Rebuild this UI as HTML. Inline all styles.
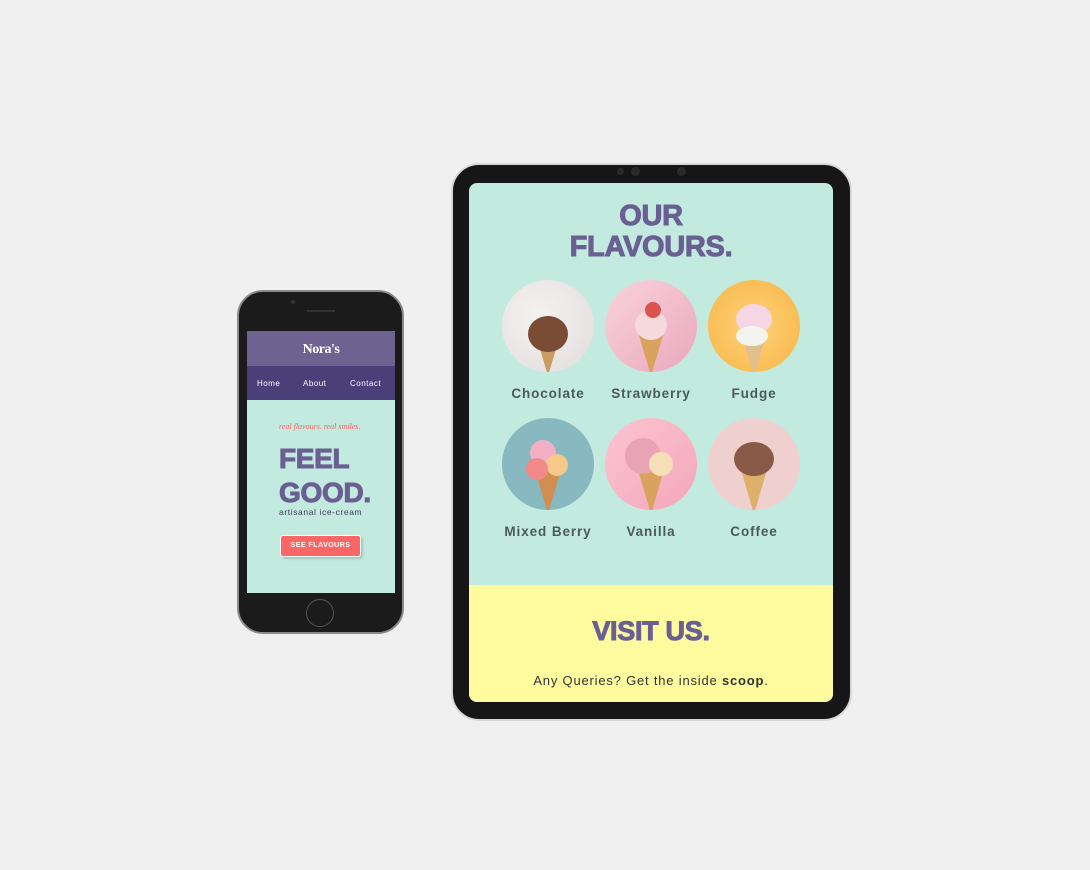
<!DOCTYPE html>
<html><head><meta charset="utf-8"><style>
*{margin:0;padding:0;box-sizing:border-box}
body{width:1090px;height:870px;background:#f0f0f0;position:relative;overflow:hidden;font-family:"Liberation Sans",sans-serif}
.abs{position:absolute}
.phone{left:237px;top:290px;width:167px;height:344px;border-radius:26px;background:#1b1b1b;border:2px solid #8a8a8a}
.pscreen{left:247px;top:331px;width:148px;height:262px;background:#c2eade;overflow:hidden}
.tab{left:451px;top:163px;width:401px;height:558px;border-radius:28px;background:#161616;border:2px solid #d8d8d8}
.tscreen{left:469px;top:183px;width:364px;height:519px;border-radius:8px;background:#c2eade;overflow:hidden}
.head{font-weight:900;color:#6a5f93;letter-spacing:-0.3px;text-align:center;line-height:1;-webkit-text-stroke:1px #6a5f93}
.circ{width:92px;height:92px;border-radius:50%;overflow:hidden}
.cone{position:absolute;left:50%;width:26px;height:44px;margin-left:-13px;bottom:-4px;background:#d9a25e;clip-path:polygon(0 0,100% 0,50% 100%)}
.scoop{position:absolute;border-radius:50%}
.lab{width:120px;text-align:center;font-weight:bold;font-size:13.5px;color:#4d5a57;letter-spacing:0.9px}
</style></head><body>

<div class="abs phone"></div>
<div class="abs" style="left:291px;top:300px;width:4px;height:4px;border-radius:50%;background:#333;"></div>
<div class="abs" style="left:307px;top:310px;width:28px;height:2px;background:#333;"></div>
<div class="abs" style="left:306px;top:599px;width:28px;height:28px;border-radius:50%;border:1.5px solid #555;"></div>
<div class="abs pscreen">
  <div class="abs" style="left:0;top:0;width:148px;height:35px;background:#6e6390;color:#fff;font-family:'Liberation Serif',serif;font-weight:bold;font-size:14px;text-align:center;line-height:37px;letter-spacing:-0.5px">Nora's</div>
  <div class="abs" style="left:0;top:35px;width:148px;height:34px;background:#4a3f78;color:#fff;font-size:8px;letter-spacing:0.5px">
    <span class="abs" style="left:10px;top:13px">Home</span>
    <span class="abs" style="left:56px;top:13px">About</span>
    <span class="abs" style="left:103px;top:13px">Contact</span>
  </div>
  <div class="abs" style="left:32px;top:91px;font-size:8px;font-style:italic;color:#f06868;font-family:'Liberation Serif',serif">real flavours. real smiles.</div>
  <div class="abs head" style="left:32px;top:111px;font-size:28px;text-align:left;line-height:34px">FEEL<br>GOOD.</div>
  <div class="abs" style="left:32px;top:176px;font-size:8.5px;color:#3e3a5a;letter-spacing:0.6px">artisanal ice-cream</div>
  <div class="abs" style="left:33px;top:204px;width:81px;height:22px;background:#fb6767;border:1.5px solid #fff;border-radius:3px;color:#fff;font-size:7px;font-weight:bold;text-align:center;line-height:19px;letter-spacing:0.5px;box-shadow:2px 2px 2px rgba(0,0,0,0.15)">SEE FLAVOURS</div>
</div>

<div class="abs tab"></div>
<div class="abs" style="left:617px;top:168px;width:7px;height:7px;border-radius:50%;background:#2a2a2a"></div>
<div class="abs" style="left:631px;top:167px;width:9px;height:9px;border-radius:50%;background:#2a2a2a"></div>
<div class="abs" style="left:677px;top:167px;width:9px;height:9px;border-radius:50%;background:#2a2a2a"></div>
<div class="abs tscreen">
  <div class="abs head" style="left:0;top:18px;width:364px;font-size:29px;line-height:31px">OUR<br>FLAVOURS.</div>

  <div class="abs circ" style="left:33px;top:97px;background:radial-gradient(circle at 40% 40%,#f6f2f2,#e2dcdc)">
    <div class="cone" style="background:#c99c64"></div>
    <div class="scoop" style="left:26px;top:36px;width:40px;height:36px;background:#7a4c33"></div>
  </div>
  <div class="abs circ" style="left:136px;top:97px;background:linear-gradient(135deg,#fad2dc,#e9a8bc)">
    <div class="cone"></div>
    <div class="scoop" style="left:30px;top:30px;width:32px;height:30px;background:#f5d9dc"></div>
    <div class="scoop" style="left:40px;top:22px;width:16px;height:16px;background:#d9534f"></div>
  </div>
  <div class="abs circ" style="left:239px;top:97px;background:radial-gradient(circle at 50% 50%,#ffd27a,#f7b545)">
    <div class="cone" style="background:#e0c090"></div>
    <div class="scoop" style="left:28px;top:24px;width:36px;height:30px;background:#f4d6e4"></div>
    <div class="scoop" style="left:28px;top:46px;width:32px;height:20px;background:#f4f4ee"></div>
  </div>
  <div class="abs lab" style="left:19px;top:203px">Chocolate</div>
  <div class="abs lab" style="left:122px;top:203px">Strawberry</div>
  <div class="abs lab" style="left:225px;top:203px">Fudge</div>

  <div class="abs circ" style="left:33px;top:235px;background:#88b8c0">
    <div class="cone" style="background:#d18e50"></div>
    <div class="scoop" style="left:28px;top:22px;width:26px;height:26px;background:#f2b0c4"></div>
    <div class="scoop" style="left:44px;top:36px;width:22px;height:22px;background:#f6c88a"></div>
    <div class="scoop" style="left:24px;top:40px;width:22px;height:22px;background:#f18a88"></div>
  </div>
  <div class="abs circ" style="left:136px;top:235px;background:linear-gradient(135deg,#fcc4d2,#f3a7ba)">
    <div class="cone"></div>
    <div class="scoop" style="left:20px;top:20px;width:36px;height:36px;background:#e9a4b4"></div>
    <div class="scoop" style="left:44px;top:34px;width:24px;height:24px;background:#f6dfb8"></div>
  </div>
  <div class="abs circ" style="left:239px;top:235px;background:#efd0cf">
    <div class="cone" style="background:#dcb06a"></div>
    <div class="scoop" style="left:26px;top:24px;width:40px;height:34px;background:#8a5a48"></div>
  </div>
  <div class="abs lab" style="left:19px;top:341px">Mixed Berry</div>
  <div class="abs lab" style="left:122px;top:341px">Vanilla</div>
  <div class="abs lab" style="left:225px;top:341px">Coffee</div>

  <div class="abs" style="left:0;top:402px;width:364px;height:117px;background:#fefa9e">
    <div class="abs head" style="left:0;top:33px;width:364px;font-size:27px">VISIT US.</div>
    <div class="abs" style="left:0;top:88px;width:364px;text-align:center;font-size:13px;color:#333;letter-spacing:0.8px">Any Queries? Get the inside <b>scoop</b>.</div>
  </div>
</div>
</body></html>
